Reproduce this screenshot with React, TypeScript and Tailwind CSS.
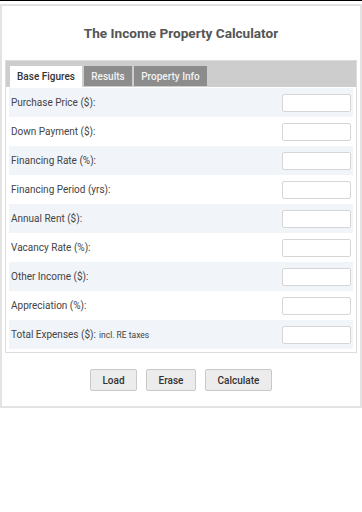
import React from "react";

const rows: { label: string; note?: string }[] = [
  { label: "Purchase Price ($):" },
  { label: "Down Payment ($):" },
  { label: "Financing Rate (%):" },
  { label: "Financing Period (yrs):" },
  { label: "Annual Rent ($):" },
  { label: "Vacancy Rate (%):" },
  { label: "Other Income ($):" },
  { label: "Appreciation (%):" },
  { label: "Total Expenses ($):", note: "incl. RE taxes" },
];

export default function App() {
  return (
    <div
      className="w-[362px] h-[512px] bg-white border-t border-black overflow-hidden"
      style={{ fontFamily: "Roboto, 'Liberation Sans', sans-serif" }}
    >
      <div className="mt-[3px] h-[404px] border-2 border-[#e3e3e3] flex flex-col">
        <div className="h-[54px] flex items-center justify-center text-[13.6px] font-bold text-[#555]">
          The Income Property Calculator
        </div>
        <div className="mx-[3px] border border-[#dcdcdc]">
          <div className="h-[26px] bg-[#cdcdcd] flex items-end pl-[4px] gap-[2px]">
            <div className="h-[21px] w-[72px] bg-white flex items-center justify-center text-[10px] font-medium text-[#333]">
              Base Figures
            </div>
            <div className="h-[20px] mb-[1px] w-[48px] bg-[#8c8c8c] flex items-center justify-center text-[10px] font-medium text-[#f2f2f2]">
              Results
            </div>
            <div className="h-[20px] mb-[1px] w-[73px] bg-[#8c8c8c] flex items-center justify-center text-[10px] font-medium text-[#f2f2f2]">
              Property Info
            </div>
          </div>
          <div className="px-[3px] pt-[1px] pb-[3px]">
            {rows.map((r, i) => (
              <div
                key={r.label}
                className={`h-[29px] flex items-center justify-between pl-[2px] pr-[2px] ${
                  i % 2 === 0 ? "bg-[#f1f4f9]" : "bg-white"
                }`}
              >
                <span className="text-[10px] text-[#444]">
                  {r.label}
                  {r.note && <span className="text-[8.5px] ml-[3px]">{r.note}</span>}
                </span>
                <div className="w-[69px] h-[18px] bg-white border border-[#d6d6d6] rounded-[2px]" />
              </div>
            ))}
          </div>
        </div>
        <div className="flex justify-center gap-[9px] mt-[16px]">
          <button className="w-[47px] h-[22px] bg-[#ececec] border border-[#c8c8c8] rounded-[2px] text-[10px] font-medium text-[#333]">
            Load
          </button>
          <button className="w-[50px] h-[22px] bg-[#ececec] border border-[#c8c8c8] rounded-[2px] text-[10px] font-medium text-[#333]">
            Erase
          </button>
          <button className="w-[67px] h-[22px] bg-[#ececec] border border-[#c8c8c8] rounded-[2px] text-[10px] font-medium text-[#333]">
            Calculate
          </button>
        </div>
      </div>
    </div>
  );
}
